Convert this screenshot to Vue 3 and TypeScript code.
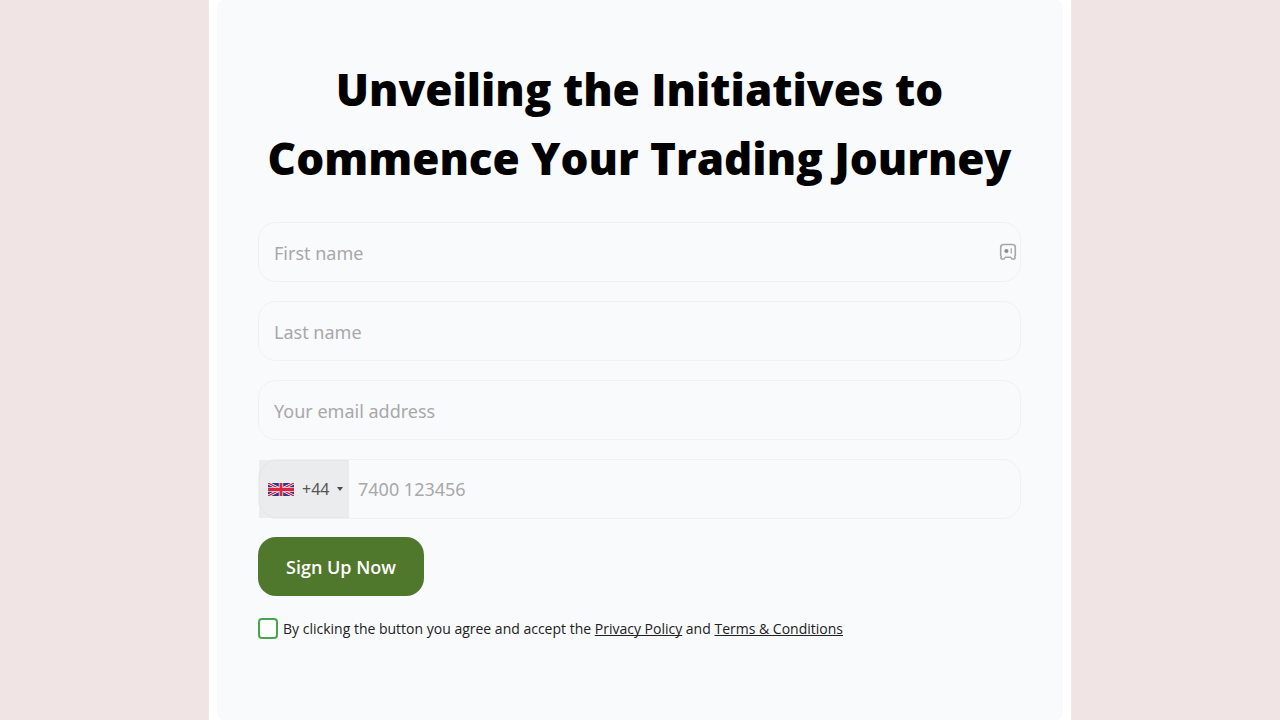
<script setup lang="ts">
import { ref } from 'vue'

interface Field {
  id: string
  type: string
  placeholder: string
  badge: boolean
}

const fields: Field[] = [
  { id: 'first-name', type: 'text', placeholder: 'First name', badge: true },
  { id: 'last-name', type: 'text', placeholder: 'Last name', badge: false },
  { id: 'email', type: 'email', placeholder: 'Your email address', badge: false },
]

const values = ref<Record<string, string>>({ 'first-name': '', 'last-name': '', email: '' })
const dialCode = ref('+44')
const phone = ref('')
const agreed = ref(false)
</script>

<template>
  <main class="page">
    <section class="frame">
      <form class="card" @submit.prevent>
        <h1 class="title">Unveiling the Initiatives to Commence Your Trading Journey</h1>

        <div v-for="field in fields" :key="field.id" class="field">
          <input
            :id="field.id"
            v-model="values[field.id]"
            class="input"
            :type="field.type"
            :placeholder="field.placeholder"
            :aria-label="field.placeholder"
          />
          <svg v-if="field.badge" class="badge" viewBox="0 0 18 18" aria-hidden="true">
            <path
              d="M4.5 1.5h9A2.8 2.8 0 0 1 16.3 4.3v8.2q-.8.9-.3 2.2.2 1.3-1.2 1.3h-1.6l-1.7-1.7h-5L4.8 16H3.2Q1.8 16 2 14.7q.5-1.3-.3-2.2V4.3A2.8 2.8 0 0 1 4.5 1.5z"
              fill="none"
              stroke="#a6a6a6"
              stroke-width="1.6"
            />
            <circle cx="7.4" cy="8" r="2.1" fill="#8c8c8c" />
            <path d="M12.3 5.3v5.2" stroke="#b0b0b0" stroke-width="1.4" />
          </svg>
        </div>

        <div class="phone">
          <div class="country">
            <svg class="flag" viewBox="0 0 26 13" preserveAspectRatio="none" aria-hidden="true">
              <rect width="26" height="13" fill="#2b3a86" />
              <path d="M0 0L26 13M26 0L0 13" stroke="#fff" stroke-width="2.8" />
              <path d="M0 0L26 13M26 0L0 13" stroke="#d5213f" stroke-width="1.3" />
              <path d="M13 0V13M0 6.5H26" stroke="#f6dfe4" stroke-width="4.4" />
              <path d="M13 0V13M0 6.5H26" stroke="#dc2340" stroke-width="2.8" />
            </svg>
            <select v-model="dialCode" class="code" aria-label="Country code">
              <option value="+44">+44</option>
            </select>
            <svg class="caret" viewBox="0 0 6 4" aria-hidden="true">
              <path d="M0 0h6L3 4z" fill="#4a4a4a" />
            </svg>
          </div>
          <input
            v-model="phone"
            class="number"
            type="tel"
            placeholder="7400 123456"
            aria-label="Phone number"
          />
        </div>

        <button class="submit" type="submit">Sign Up Now</button>

        <div class="consent">
          <input id="agree" v-model="agreed" class="check" type="checkbox" />
          <label for="agree">
            By clicking the button you agree and accept the
            <a href="#privacy">Privacy Policy</a> and <a href="#terms">Terms &amp; Conditions</a>
          </label>
        </div>
      </form>
    </section>
  </main>
</template>

<style>
body {
  margin: 0;
  background: #f0e4e4;
}
</style>

<style scoped>
.page {
  display: flex;
  justify-content: center;
  min-height: 100vh;
  font-family: 'Open Sans', 'Noto Sans', sans-serif;
}

.frame {
  display: flex;
  box-sizing: border-box;
  width: 100%;
  max-width: 862px;
  padding: 0 8px;
  background: #fff;
}

.card {
  box-sizing: border-box;
  width: 100%;
  padding: 55px 42px 55px 41px;
  border-radius: 8px;
  background: #f9fafc;
}

.title {
  margin: 0 0 29px;
  font-size: 44px;
  font-weight: 800;
  line-height: 69px;
  text-align: center;
  color: #000;
}

.field {
  position: relative;
  margin-bottom: 19px;
}

.input {
  display: block;
  box-sizing: border-box;
  width: 100%;
  height: 60px;
  padding: 2px 15px 0;
  border: 1px solid #f0f1f3;
  border-radius: 18px;
  background: transparent;
  font: 400 18px 'Noto Sans', sans-serif;
  color: #333;
}

.input::placeholder,
.number::placeholder {
  color: #a8a8a8;
  opacity: 1;
}

.badge {
  position: absolute;
  top: 21px;
  right: 4px;
  width: 18px;
  height: 18px;
}

.phone {
  display: flex;
  box-sizing: border-box;
  height: 60px;
  margin-bottom: 18px;
  border: 1px solid #f0f1f3;
  border-radius: 18px;
}

.country {
  position: relative;
  display: flex;
  align-items: center;
  box-sizing: border-box;
  width: 90px;
  padding: 0 6px 0 9px;
  background: #ebecee;
}

.country::before {
  content: '';
  position: absolute;
  inset: 0;
  border: 1px solid #e4e6e8;
  border-right: 0;
  border-radius: 18px 0 0 18px;
  pointer-events: none;
}

.flag {
  flex: none;
  width: 26px;
  height: 13px;
}

.code {
  flex: 1;
  min-width: 0;
  height: 100%;
  padding: 0 0 0 8px;
  border: 0;
  background: transparent;
  appearance: none;
  font: 400 16px 'Noto Sans', sans-serif;
  color: #555;
}

.caret {
  flex: none;
  width: 6px;
  height: 4px;
}

.number {
  flex: 1;
  min-width: 0;
  padding: 0 15px 0 9px;
  border: 0;
  border-radius: 0 18px 18px 0;
  background: transparent;
  font: 400 18px 'Noto Sans', sans-serif;
  color: #333;
}

.submit {
  display: block;
  height: 59px;
  padding: 0 28px;
  border: 0;
  border-radius: 18px;
  background: #50782d;
  font: 600 18px 'Open Sans', sans-serif;
  color: #fff;
}

.consent {
  display: flex;
  align-items: center;
  gap: 5px;
  margin-top: 22px;
  font-size: 14px;
  line-height: 20px;
  color: #222;
}

.check {
  flex: none;
  box-sizing: border-box;
  width: 20px;
  height: 21px;
  margin: 0;
  border: 2px solid #4ba350;
  border-radius: 4px;
  background: #fff;
  appearance: none;
}

.check:checked {
  background: #4ba350;
}

.consent a {
  color: inherit;
  text-decoration: underline;
  text-decoration-skip-ink: none;
}
</style>
